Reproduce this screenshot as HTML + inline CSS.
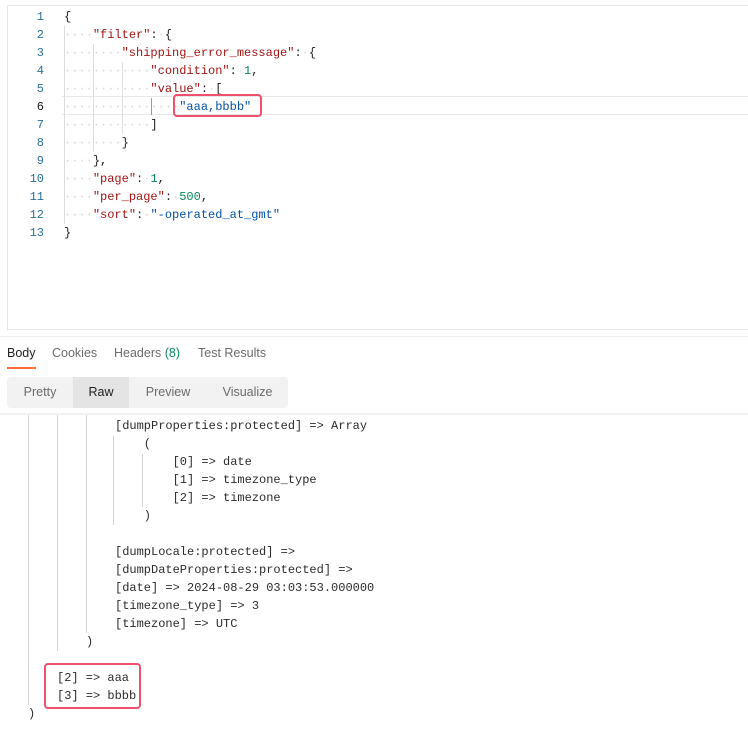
<!DOCTYPE html>
<html><head><meta charset="utf-8"><style>
body{margin:0;width:748px;height:730px;background:#fff;position:relative;overflow:hidden;font-family:"Liberation Sans",sans-serif}
.m{font-family:"Liberation Mono",monospace;font-size:12px;line-height:18px;position:absolute;white-space:pre;color:#212121}
.ln{position:absolute;left:20px;width:24px;text-align:right;color:#2a6f97;font-family:"Liberation Mono",monospace;font-size:12px;line-height:18px}
.k{color:#a31515}.n{color:#098658}.s{color:#0451a5}.d{color:#d6d6d6}
.g{position:absolute;width:1px;background:#d4d4d4}
.red{position:absolute;border:2.5px solid #f0506e;border-radius:4px;box-sizing:border-box}
.tab{position:absolute;top:346px;font-size:12.5px;color:#6b6b6b}
.seg{position:absolute;top:377px;height:31px;line-height:31px;font-size:12.5px;color:#6b6b6b;text-align:center}
</style></head><body>
<div style="position:absolute;left:7px;top:5px;width:760px;height:325px;border:1px solid #e6e6e6;box-sizing:border-box"></div>
<div style="position:absolute;left:62px;top:96px;width:700px;height:17px;border-top:1px solid #e8e8e8;border-bottom:1px solid #e8e8e8"></div>
<div class="ln" style="top:8px">1</div><div class="ln" style="top:26px">2</div><div class="ln" style="top:44px">3</div><div class="ln" style="top:62px">4</div><div class="ln" style="top:80px">5</div><div class="ln" style="top:98px;color:#1a1a1a">6</div><div class="ln" style="top:116px">7</div><div class="ln" style="top:134px">8</div><div class="ln" style="top:152px">9</div><div class="ln" style="top:170px">10</div><div class="ln" style="top:188px">11</div><div class="ln" style="top:206px">12</div><div class="ln" style="top:224px">13</div>
<div class="g" style="left:64px;top:26px;height:198px;background:#ddd"></div>
<div class="g" style="left:93px;top:44px;height:108px;background:#ddd"></div>
<div class="g" style="left:122px;top:62px;height:72px;background:#ddd"></div>
<div class="g" style="left:151px;top:98px;height:17px;background:#999"></div>
<div class="m" style="left:64px;top:8px">{
<span class="d">····</span><span class="k">"filter"</span>:<span class="d">·</span>{
<span class="d">········</span><span class="k">"shipping_error_message"</span>:<span class="d">·</span>{
<span class="d">············</span><span class="k">"condition"</span>:<span class="d">·</span><span class="n">1</span>,
<span class="d">············</span><span class="k">"value"</span>:<span class="d">·</span>[
<span class="d">················</span><span class="s">"aaa,bbbb"</span>
<span class="d">············</span>]
<span class="d">········</span>}
<span class="d">····</span>},
<span class="d">····</span><span class="k">"page"</span>:<span class="d">·</span><span class="n">1</span>,
<span class="d">····</span><span class="k">"per_page"</span>:<span class="d">·</span><span class="n">500</span>,
<span class="d">····</span><span class="k">"sort"</span>:<span class="d">·</span><span class="s">"-operated_at_gmt"</span>
}</div>
<div class="red" style="left:173px;top:94px;width:89px;height:23px"></div>
<div style="position:absolute;left:0;top:336px;width:748px;height:1px;background:#ececec"></div>
<div class="tab" style="left:7px;color:#212121">Body</div>
<div style="position:absolute;left:7px;top:367px;width:29px;height:2px;background:#ff6c37"></div>
<div class="tab" style="left:52px">Cookies</div>
<div class="tab" style="left:114px">Headers <span style="color:#0a8a5a">(8)</span></div>
<div class="tab" style="left:198px">Test Results</div>
<div style="position:absolute;left:7px;top:377px;width:281px;height:31px;background:#f2f2f2;border-radius:4px"></div>
<div class="seg" style="left:7px;width:66px">Pretty</div>
<div class="seg" style="left:73px;width:56px;background:#e4e4e4;color:#212121">Raw</div>
<div class="seg" style="left:129px;width:78px">Preview</div>
<div class="seg" style="left:207px;width:81px">Visualize</div>
<div style="position:absolute;left:0;top:413px;width:748px;height:2px;background:#f3f3f3"></div>
<div class="g" style="left:28px;top:415px;height:290px"></div>
<div class="g" style="left:57px;top:415px;height:236px"></div>
<div class="g" style="left:86px;top:415px;height:218px"></div>
<div class="g" style="left:113px;top:436px;height:89px"></div>
<div class="g" style="left:142px;top:454px;height:53px"></div>
<div class="m" style="left:115px;top:417px;color:#2b2b2b">[dumpProperties:protected] => Array
    (
        [0] => date
        [1] => timezone_type
        [2] => timezone
    )

[dumpLocale:protected] =>
[dumpDateProperties:protected] =>
[date] => 2024-08-29 03:03:53.000000
[timezone_type] => 3
[timezone] => UTC</div>
<div class="m" style="left:86px;top:633px;color:#2b2b2b">)</div>
<div class="m" style="left:57px;top:669px;color:#2b2b2b">[2] => aaa
[3] => bbbb</div>
<div class="m" style="left:28px;top:705px;color:#2b2b2b">)</div>
<div class="red" style="left:44px;top:663px;width:97px;height:46px"></div>
</body></html>
